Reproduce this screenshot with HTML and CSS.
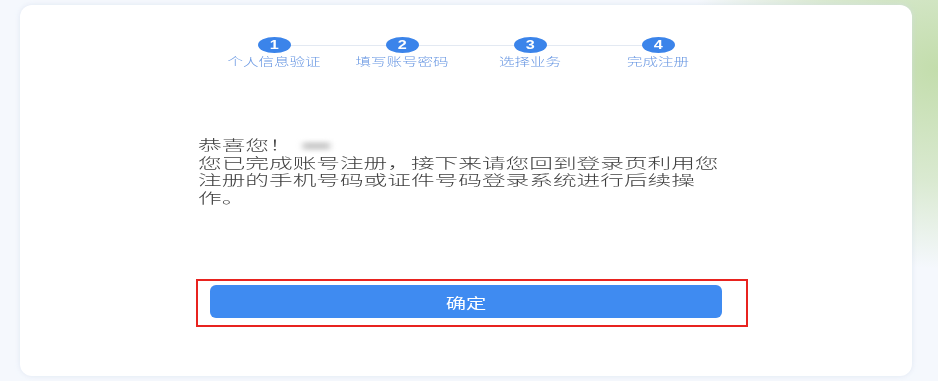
FILE: index.html
```html
<html>
<head>
    <meta charset="utf-8">
    <link rel="stylesheet" href="styles.css">
</head>
<body>
    <div class="card">
        <div class="steps">
            <div class="step">
                <span class="dot"><span class="num">1</span></span>
                <span class="step-label">个人信息验证</span>
            </div>
            <div class="step">
                <span class="dot"><span class="num">2</span></span>
                <span class="step-label">填写账号密码</span>
            </div>
            <div class="step">
                <span class="dot"><span class="num">3</span></span>
                <span class="step-label">选择业务</span>
            </div>
            <div class="step">
                <span class="dot"><span class="num">4</span></span>
                <span class="step-label">完成注册</span>
            </div>
        </div>

        <div class="message">
            <p>恭喜您！<span class="masked"></span><br/>
            您已完成账号注册，接下来请您回到登录页利用您注册的手机号码或证件号码登录系统进行后续操作。</p>
        </div>

        <div class="highlight">
            <button type="button" class="button"><span class="btn-text">确定</span></button>
        </div>
    </div>
</body>
</html>
```

FILE: styles.css
```css
html, body {
    margin: 0;
    height: 100%;
}

body {
    font-family: "Noto Sans CJK SC", "Noto Sans", sans-serif;
    background:
        radial-gradient(ellipse 320px 250px at 100% 18%, #c3ddac 0%, rgba(200, 224, 180, 0.6) 45%, rgba(245, 248, 253, 0) 80%),
        #f5f8fd;
    overflow: hidden;
}

.card {
    margin: 5px 26px 0 20px;
    height: 371px;
    box-sizing: border-box;
    padding-top: 32px;
    background-color: #fff;
    border-radius: 12px;
    box-shadow: 0 0 5px rgba(210, 220, 236, 0.6);
}

.steps {
    position: relative;
    display: flex;
    width: 512px;
    margin-left: 190px;
}

    .steps::before {
        content: "";
        position: absolute;
        top: 8px;
        left: 64px;
        right: 64px;
        height: 1px;
        background-color: #e3e9f2;
    }

.step {
    width: 128px;
    display: flex;
    flex-direction: column;
    align-items: center;
}

    .step .dot {
        position: relative;
        width: 33px;
        height: 16px;
        border-radius: 50%;
        background-color: #3b84ea;
        display: flex;
        align-items: center;
        justify-content: center;
    }

    .step .num {
        color: #fff;
        font-family: "Liberation Sans", sans-serif;
        font-weight: bold;
        font-size: 12px;
        line-height: 16px;
        transform: scaleX(1.35);
    }

    .step .step-label {
        margin-top: 1px;
        color: #6796e2;
        font-size: 11px;
        font-weight: 300;
        line-height: 14px;
        white-space: nowrap;
        transform: scaleX(1.41);
    }

.message {
    margin-left: 178px;
    margin-top: 68px;
}

    .message p {
        margin: 0;
        width: 314px;
        font-size: 14px;
        font-weight: 300;
        line-height: 17.5px;
        color: #404040;
        transform: scaleX(1.69);
        transform-origin: left top;
    }

.masked {
    display: inline-block;
    width: 16px;
    height: 8px;
    margin-left: 6px;
    background-color: #cdcdcd;
    filter: blur(2px);
}

.highlight {
    margin-top: 73px;
    margin-left: 176px;
    width: 552px;
    height: 48px;
    box-sizing: border-box;
    border: 2px solid #e8231f;
    padding: 4px 24px 0 12px;
}

.button {
    display: block;
    width: 100%;
    height: 33px;
    border: none;
    border-radius: 6px;
    background-color: #3f8bf1;
    color: #fff;
    font-family: "Noto Sans CJK SC", sans-serif;
    font-size: 14px;
    padding: 0;
}

    .button .btn-text {
        display: inline-block;
        transform: scaleX(1.45);
    }
```
